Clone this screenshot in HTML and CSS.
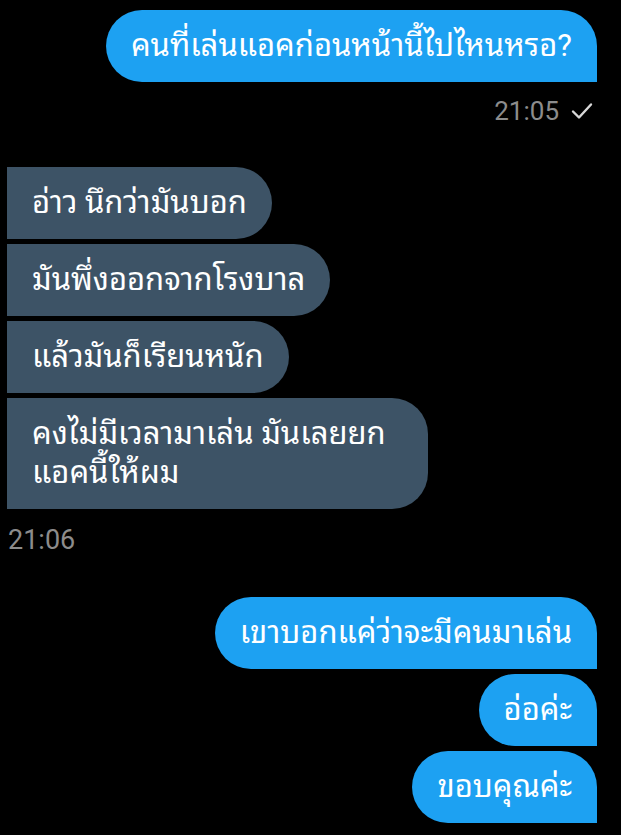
FILE: index.html
```html
<!DOCTYPE html>
<html lang="th">
<head>
  <meta charset="UTF-8" />
  <title>Chat</title>
  <link rel="stylesheet" href="styles.css">
</head>
<body>
  <div class="chat">
    <div class="group out">
      <div class="bubble">คนที่เล่นแอคก่อนหน้านี้ไปไหนหรอ?</div>
      <div class="meta">
        <span>21:05</span>
        <svg class="tick" width="22" height="18" viewBox="0 0 22 18">
          <path d="M2 9.5 L8 15.5 L20 2.5" fill="none" stroke="#d8d8d8" stroke-width="2.4" stroke-linecap="round" stroke-linejoin="round"/>
        </svg>
      </div>
    </div>

    <div class="group in">
      <div class="bubble">อ่าว นึกว่ามันบอก</div>
      <div class="bubble">มันพึ่งออกจากโรงบาล</div>
      <div class="bubble">แล้วมันก็เรียนหนัก</div>
      <div class="bubble">คงไม่มีเวลามาเล่น มันเลยยก แอคนี้ให้ผม</div>
      <div class="meta"><span>21:06</span></div>
    </div>

    <div class="group out last">
      <div class="bubble">เขาบอกแค่ว่าจะมีคนมาเล่น</div>
      <div class="bubble">อ่อค่ะ</div>
      <div class="bubble">ขอบคุณค่ะ</div>
    </div>
  </div>
</body>
</html>
```

FILE: styles.css
```css
* { margin: 0; padding: 0; box-sizing: border-box; }
html, body { background: #000; }

body {
  width: 621px; height: 835px; overflow: hidden;
  font-family: Roboto, "Noto Sans Thai Looped", "Noto Sans Thai", sans-serif;
}

.chat { display: flex; flex-direction: column; padding-top: 10px; }

.group { display: flex; flex-direction: column; gap: 5px; }
.group.out { align-items: flex-end; padding-right: 24px; }
.group.in { align-items: flex-start; padding-left: 7px; margin-top: 42px; }
.group.last { margin-top: 43px; }

.bubble {
  color: #fff;
  font-size: 31px; line-height: 39px;
  padding: 16px 25px 17px 25px;
}

.out .bubble {
  background: #1da1f2;
  border-radius: 36px 36px 0 36px;
  max-width: 520px;
}
.in .bubble {
  background: #3d5366;
  border-radius: 0 36px 36px 0;
  max-width: 421px;
}

.meta {
  display: flex; align-items: center; gap: 12px;
  font-size: 26px; line-height: 28px; color: #8c8c8c;
  margin-top: 10px;
}
.out .meta { padding-right: 4px; }
.in .meta { padding-left: 1px; margin-top: 12px; font-size: 27px; }
.tick { display: block; }
```
